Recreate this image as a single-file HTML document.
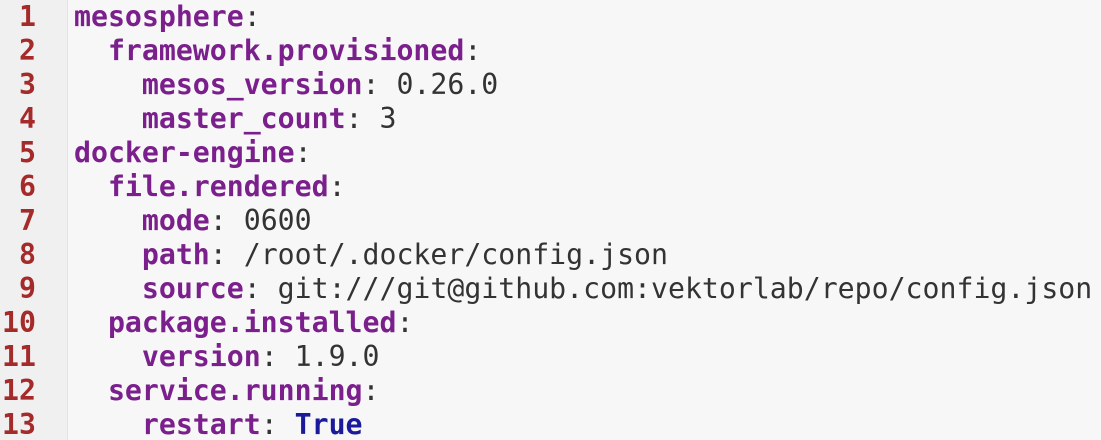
<!DOCTYPE html>
<html><head><meta charset="utf-8"><style>
html,body{margin:0;padding:0;width:1101px;height:440px;overflow:hidden;background:#f7f7f7;}
.wrap{position:relative;width:1101px;height:440px;font-family:"DejaVu Sans Mono","Liberation Mono",monospace;font-size:28.2px;}
.gut{position:absolute;left:0;top:0;width:67px;height:440px;background:#f0f0f0;border-right:1px solid #e2e2e2;}
.nums{position:absolute;left:0;top:0;width:36px;text-align:right;color:#a52a2a;font-weight:bold;line-height:34px;}
.code{position:absolute;left:74px;top:0;line-height:34px;white-space:pre;color:#333;}
.k{color:#7b1f8c;font-weight:bold;}
.t{color:#1a1a9a;font-weight:bold;}
</style></head><body><div class="wrap">
<div class="gut"></div>
<div class="nums">1<br>2<br>3<br>4<br>5<br>6<br>7<br>8<br>9<br>10<br>11<br>12<br>13</div>
<div class="code"><span class="k">mesosphere</span>:
  <span class="k">framework.provisioned</span>:
    <span class="k">mesos_version</span>: 0.26.0
    <span class="k">master_count</span>: 3
<span class="k">docker-engine</span>:
  <span class="k">file.rendered</span>:
    <span class="k">mode</span>: 0600
    <span class="k">path</span>: /root/.docker/config.json
    <span class="k">source</span>: git:///git@github.com:vektorlab/repo/config.json
  <span class="k">package.installed</span>:
    <span class="k">version</span>: 1.9.0
  <span class="k">service.running</span>:
    <span class="k">restart</span>: <span class="t">True</span></div>
</div></body></html>
